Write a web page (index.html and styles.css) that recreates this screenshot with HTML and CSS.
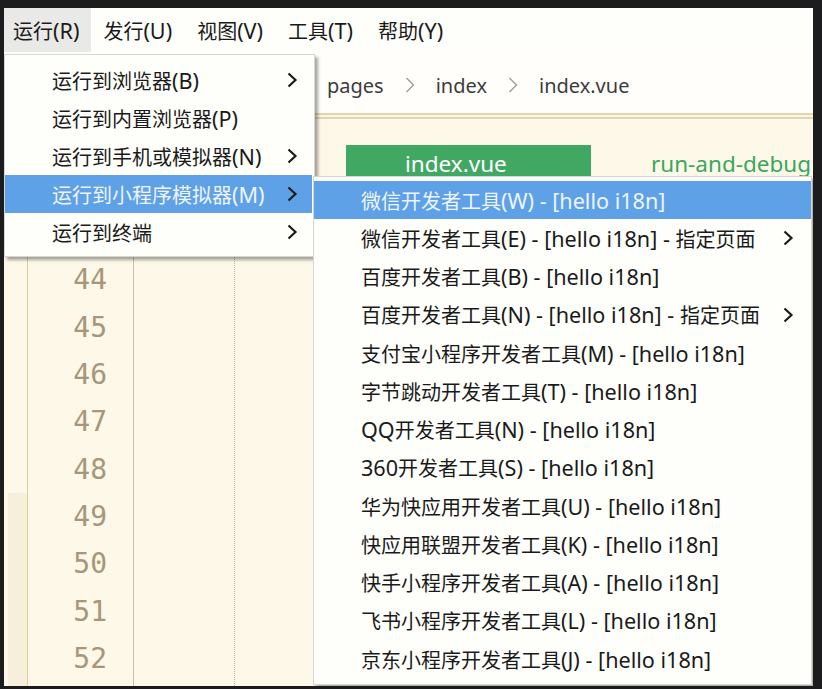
FILE: index.html
```html
<!DOCTYPE html>
<html lang="zh-CN">
<head>
<meta charset="utf-8">
<title>HBuilderX</title>
<link rel="stylesheet" href="styles.css">
</head>
<body>
<div class="window">
  <nav class="menubar">
    <span class="mb-item active">运行<span class="l">(R)</span></span>
    <span class="mb-item">发行<span class="l">(U)</span></span>
    <span class="mb-item">视图<span class="l">(V)</span></span>
    <span class="mb-item">工具<span class="l">(T)</span></span>
    <span class="mb-item">帮助<span class="l">(Y)</span></span>
  </nav>

  <div class="breadcrumb">
    <span class="crumb">pages</span>
    <svg class="crumb-sep" width="10" height="18" viewBox="0 0 10 18"><path d="M1.5 2 L8.5 9 L1.5 16" fill="none" stroke="#9a9a9a" stroke-width="1.3"/></svg>
    <span class="crumb">index</span>
    <svg class="crumb-sep" width="10" height="18" viewBox="0 0 10 18"><path d="M1.5 2 L8.5 9 L1.5 16" fill="none" stroke="#9a9a9a" stroke-width="1.3"/></svg>
    <span class="crumb">index.vue</span>
  </div>
  <div class="rule"></div>

  <div class="editor">
    <div class="strip"><div class="strip-mark"></div></div>
    <div class="gutter">
      <div class="ln">44</div>
      <div class="ln">45</div>
      <div class="ln">46</div>
      <div class="ln">47</div>
      <div class="ln">48</div>
      <div class="ln">49</div>
      <div class="ln">50</div>
      <div class="ln">51</div>
      <div class="ln">52</div>
    </div>
    <div class="code">
      <div class="guide"></div>
      <div class="code-body">
        <div class="tabs">
          <span class="tab-active">index.vue</span>
          <span class="tab-link">run-and-debug</span>
        </div>
      </div>
    </div>
  </div>

  <div class="dropdown">
    <div class="mi"><span>运行到浏览器<span class="l">(B)</span></span><svg class="chev" width="12" height="18" viewBox="0 0 12 18"><path d="M2.5 2.5 L9.5 9 L2.5 15.5" fill="none" stroke="#1a1a1a" stroke-width="2.2"/></svg></div>
    <div class="mi"><span>运行到内置浏览器<span class="l">(P)</span></span></div>
    <div class="mi"><span>运行到手机或模拟器<span class="l">(N)</span></span><svg class="chev" width="12" height="18" viewBox="0 0 12 18"><path d="M2.5 2.5 L9.5 9 L2.5 15.5" fill="none" stroke="#1a1a1a" stroke-width="2.2"/></svg></div>
    <div class="mi hl"><span>运行到小程序模拟器<span class="l">(M)</span></span><svg class="chev" width="12" height="18" viewBox="0 0 12 18"><path d="M2.5 2.5 L9.5 9 L2.5 15.5" fill="none" stroke="#1a1a1a" stroke-width="2.2"/></svg></div>
    <div class="mi"><span>运行到终端</span><svg class="chev" width="12" height="18" viewBox="0 0 12 18"><path d="M2.5 2.5 L9.5 9 L2.5 15.5" fill="none" stroke="#1a1a1a" stroke-width="2.2"/></svg></div>
  </div>

  <div class="submenu">
    <div class="si hl"><span>微信开发者工具<span class="l">(W) - [hello i18n]</span></span></div>
    <div class="si"><span>微信开发者工具<span class="l">(E) - [hello i18n] - </span>指定页面</span><svg class="chev" width="12" height="18" viewBox="0 0 12 18"><path d="M2.5 2.5 L9.5 9 L2.5 15.5" fill="none" stroke="#1a1a1a" stroke-width="2.2"/></svg></div>
    <div class="si"><span>百度开发者工具<span class="l">(B) - [hello i18n]</span></span></div>
    <div class="si"><span>百度开发者工具<span class="l">(N) - [hello i18n] - </span>指定页面</span><svg class="chev" width="12" height="18" viewBox="0 0 12 18"><path d="M2.5 2.5 L9.5 9 L2.5 15.5" fill="none" stroke="#1a1a1a" stroke-width="2.2"/></svg></div>
    <div class="si"><span>支付宝小程序开发者工具<span class="l">(M) - [hello i18n]</span></span></div>
    <div class="si"><span>字节跳动开发者工具<span class="l">(T) - [hello i18n]</span></span></div>
    <div class="si"><span><span class="l">QQ</span>开发者工具<span class="l">(N) - [hello i18n]</span></span></div>
    <div class="si"><span><span class="l">360</span>开发者工具<span class="l">(S) - [hello i18n]</span></span></div>
    <div class="si"><span>华为快应用开发者工具<span class="l">(U) - [hello i18n]</span></span></div>
    <div class="si"><span>快应用联盟开发者工具<span class="l">(K) - [hello i18n]</span></span></div>
    <div class="si"><span>快手小程序开发者工具<span class="l">(A) - [hello i18n]</span></span></div>
    <div class="si"><span>飞书小程序开发者工具<span class="l">(L) - [hello i18n]</span></span></div>
    <div class="si"><span>京东小程序开发者工具<span class="l">(J) - [hello i18n]</span></span></div>
  </div>
</div>
</body>
</html>
```

FILE: styles.css
```css
html, body {
  margin: 0;
  padding: 0;
  background: #1c1c1e;
}

body {
  padding: 8px 9px 0 4px;
  font-family: "Noto Sans", "Noto Sans CJK SC", sans-serif;
  font-size: 20px;
  color: #1a1a1a;
}

.l {
  font-size: 21.6px;
}

.window {
  position: relative;
  width: 809px;
  height: 678px;
  overflow: hidden;
  background: #fdf8e8;
  display: flex;
  flex-direction: column;
}

/* menu bar */
.menubar {
  height: 44px;
  flex: none;
  display: flex;
  align-items: stretch;
  background: #fefefb;
}

.mb-item {
  display: flex;
  align-items: center;
  padding: 0 13px 0 12px;
  white-space: nowrap;
}

.mb-item.active {
  background: #e9e9e7;
  padding-left: 9px;
  padding-right: 12px;
}

/* breadcrumb */
.breadcrumb {
  height: 56px;
  padding-top: 5px;
  flex: none;
  display: flex;
  align-items: center;
  gap: 21px;
  padding-left: 323px;
  background: #fffefa;
  color: #3c3c3c;
}

.crumb-sep {
  display: block;
}

.rule {
  flex: none;
  height: 2px;
  border-top: 2px solid #e2d5ae;
  border-bottom: 2px solid #e2d5ae;
  background: #fbf5e4;
}

/* editor */
.editor {
  flex: 1;
  display: grid;
  grid-template-columns: 24px 106px 1fr;
  background: #fdf8e8;
}

.strip {
  border-right: 1px solid #dfcf9f;
  display: flex;
  flex-direction: column;
  justify-content: flex-end;
  padding-left: 4px;
}

.strip-mark {
  height: 193px;
  background: #f5efdc;
}

.gutter {
  border-right: 1px solid #c9c1ab;
  padding-top: 137.4px;
  padding-right: 26px;
  text-align: right;
  font-family: "DejaVu Sans Mono", monospace;
  font-size: 28px;
  color: #a8967a;
}

.ln {
  height: 47.33px;
  line-height: 47.33px;
}

.code {
  display: grid;
  grid-template-columns: 101px 1fr;
}

.guide {
  border-right: 1px dotted #b9b5aa;
}

.code-body {
  padding-top: 26px;
  padding-left: 111px;
  overflow: hidden;
}

.tabs {
  display: flex;
  align-items: center;
  white-space: nowrap;
  height: 36px;
  font-size: 22.5px;
}

.tab-active {
  display: flex;
  align-items: center;
  width: 186px;
  height: 36px;
  padding-left: 59px;
  background: #41a863;
  color: #ffffff;
  flex: none;
}

.tab-link {
  margin-left: 60px;
  color: #3ba65e;
}

/* dropdown menus */
.dropdown {
  position: absolute;
  left: 0;
  top: 46px;
  width: 309px;
  padding: 6px 0 5px;
  background: #fefefb;
  border: 1px solid #d6d6d6;
  box-shadow: 3px 3px 3px rgba(0, 0, 0, 0.35);
}

.mi {
  height: 38px;
  margin-right: 2px;
  padding-left: 47px;
  padding-right: 14px;
  display: flex;
  align-items: center;
  justify-content: space-between;
  white-space: nowrap;
}

.submenu {
  position: absolute;
  left: 309px;
  top: 168px;
  width: 497px;
  padding: 4px 0 6px;
  background: #fefefb;
  border: 1px solid #d6d6d6;
  box-shadow: 3px 3px 3px rgba(0, 0, 0, 0.3);
}

.si {
  height: 38.25px;
  padding-left: 47px;
  padding-right: 17px;
  display: flex;
  align-items: center;
  justify-content: space-between;
  white-space: nowrap;
}

.hl {
  background: #5ea1e6;
  color: #eef5fd;
}

.chev {
  display: block;
  flex: none;
}
```
